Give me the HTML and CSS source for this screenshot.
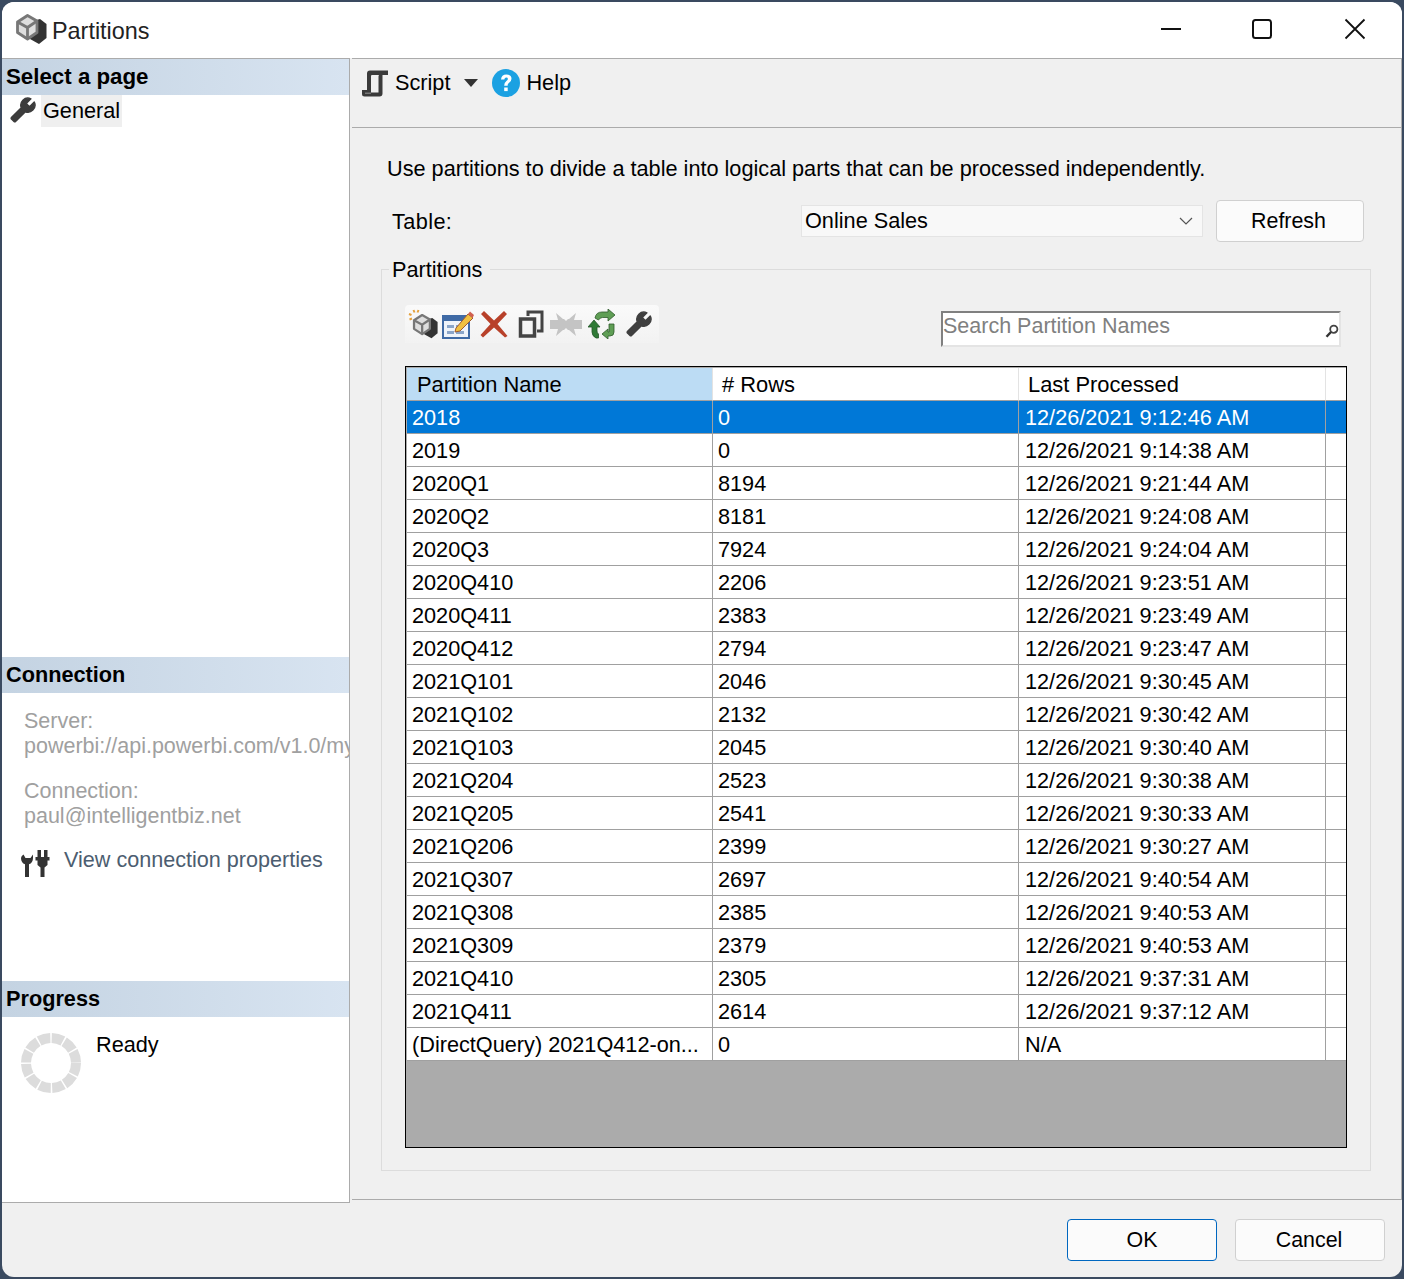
FILE: index.html
```html
<!DOCTYPE html>
<html lang="en">
<head>
<meta charset="utf-8">
<title>Partitions</title>
<link rel="stylesheet" href="styles.css">
</head>
<body>
<svg class="defs" width="0" height="0" aria-hidden="true">
  <symbol id="wrench" viewBox="0 0 24 24"><path transform="translate(24 0) scale(-1 1)" stroke-width="1.300" stroke-linejoin="round" d="M22.7 19l-9.1-9.1c.9-2.3.4-5-1.5-6.9-2-2-5-2.4-7.4-1.3L9 6 6 9 1.6 4.700C.4 7.100.9 10.100 2.900 12.100c1.900 1.900 4.600 2.400 6.900 1.500l9.100 9.100c.4.4 1 .4 1.400 0l2.300-2.300c.5-.4.5-1.100.1-1.400z"/></symbol>
  <symbol id="cube" viewBox="0 0 32 32">
    <path d="M15 9l10-3 6.500 5v14l-7.500 6-9-5z" fill="#333"/>
    <path d="M2.500 9l10-6.500 9.500 5.500v11.500l-9.500 6.500-10-6.500z" fill="#dedede" stroke="#777" stroke-width="2.800" stroke-linejoin="round"/>
    <path d="M2.500 9l10 5.500 9.500-6.500M12.500 14.500V25.500" fill="none" stroke="#777" stroke-width="2.800"/>
  </symbol>
</svg>
<div class="window">
  <header class="titlebar">
    <svg class="app-icon soft" width="32" height="32"><use href="#cube"/></svg>
    <span class="title">Partitions</span>
    <div class="caption">
      <svg class="cap-btn cap-min" width="22" height="22" viewBox="0 0 22 22"><path d="M1 11h20" stroke="#111" stroke-width="2"/></svg>
      <svg class="cap-btn" width="22" height="22" viewBox="0 0 22 22"><rect x="2" y="2" width="18" height="18" rx="2.5" fill="none" stroke="#111" stroke-width="2"/></svg>
      <svg class="cap-btn" width="22" height="22" viewBox="0 0 22 22"><path d="M1.500 1.500l19 19M20.500 1.500l-19 19" stroke="#111" stroke-width="1.800"/></svg>
    </div>
  </header>
  <div class="main">
    <aside class="sidebar">
      <section class="side-pages">
        <h2 class="side-head">Select a page</h2>
        <div class="page-item">
          <svg class="page-icon soft" width="26" height="26"><use href="#wrench" fill="#3c3c3c" stroke="#3c3c3c"/></svg>
          <span class="page-label">General</span>
        </div>
      </section>
      <section class="side-conn">
        <h2 class="side-head">Connection</h2>
        <div class="conn-body">
          <p class="conn-block">Server:<br>powerbi://api.powerbi.com/v1.0/my</p>
          <p class="conn-block">Connection:<br>paul@intelligentbiz.net</p>
          <div class="conn-link">
            <svg width="30" height="30" viewBox="0 0 30 30" class="conn-icon soft">
              <path d="M1 9c0 3 1.500 5.500 4 6.300V28h4V15.300C11.500 14.500 13 12 13 9V5.500L10.500 9h-5L3.500 5.500Q1 7 1 9z" fill="#333"/>
              <path d="M17.500 1h3.500v7h3V1h3.500v7h2v3.500h-2v4.500l-3 2.500V28h-4V18.500l-3-2.500v-4.500h-2V8h2z" fill="#333"/>
            </svg>
            <span>View connection properties</span>
          </div>
        </div>
      </section>
      <section class="side-progress">
        <h2 class="side-head">Progress</h2>
        <div class="progress-body">
          <svg class="spinner soft" width="60" height="60" viewBox="0 0 60 60"><circle cx="30" cy="30" r="25" fill="none" stroke="#dcdcdc" stroke-width="10" stroke-dasharray="11.6 1.49"/></svg>
          <span class="ready">Ready</span>
        </div>
      </section>
    </aside>
    <div class="pane">
      <div class="toolbar">
        <svg width="28" height="30" viewBox="0 0 28 30" class="tool-script soft">
          <path fill-rule="evenodd" d="M9 2.500H27V7H21.500V25.500Q21.500 28.500 18.500 28.500H3.500Q1 28.500 1 26V22H6V5.500Q6 2.500 9 2.500ZM10.500 7Q10 7.500 10 8.500V24.500H17.500V8.500Q17.500 7.500 18 7Z" fill="#3a3a3a"/>
          <path d="M4 24.500h6v1.500H4z" fill="#777"/>
        </svg>
        <span class="tool-text">Script</span>
        <span class="caret"></span>
        <svg width="28" height="28" viewBox="0 0 28 28" class="tool-help">
          <circle cx="14" cy="14" r="14" fill="#1ba1e2"/>
          <path d="M9 10.500q.5-5 5.300-5 5.200 0 5.200 4.300 0 2.700-2.600 4.100-1.300.8-1.300 2.800h-3.400q-.1-3.200 2.200-4.800 1.500-1 1.500-2 0-1.300-1.600-1.300-1.700 0-2 1.900z" fill="#fff"/>
          <rect x="12.200" y="18.500" width="3.500" height="3.600" fill="#fff"/>
        </svg>
        <span class="tool-text">Help</span>
      </div>
      <div class="content">
        <p class="intro">Use partitions to divide a table into logical parts that can be processed independently.</p>
        <div class="table-row">
          <span class="table-label">Table:</span>
          <div class="combo">
            <span>Online Sales</span>
            <svg width="14" height="8" viewBox="0 0 14 8"><path d="M1 1l6 6 6-6" fill="none" stroke="#555" stroke-width="1.200"/></svg>
          </div>
          <div class="btn btn-refresh">Refresh</div>
        </div>
        <fieldset class="group">
          <legend class="group-title">Partitions</legend>
          <div class="group-tools">
            <div class="icon-strip">
              <svg class="tool-new soft" width="30" height="30" viewBox="0 0 30 30"><use href="#cube" x="4" y="4" width="26" height="26"/><path d="M1 5l2.500 1M5.500 1l1 2.500M1.500 10.500l2.500-1M10.500 1l-1 2.500" stroke="#e5a13c" stroke-width="2"/></svg>
              <svg class="soft" width="32" height="30" viewBox="0 0 32 30">
                <rect x="1" y="7" width="26" height="22" fill="#eef3fa" stroke="#3f6aa5" stroke-width="2"/>
                <rect x="1" y="7" width="26" height="5" fill="#3f6aa5"/>
                <path d="M5 16h7v3H5zM14 16h8v3h-8zM5 22h7v3H5zM14 22h8v3h-8z" fill="#8aa5c9"/>
                <path d="M14 19L26 5l5 4-13 13-5 1z" fill="#f0c040" stroke="#a05a30" stroke-width="1"/>
                <path d="M26 5l2-2.500 4 3.500-1.500 3z" fill="#d06050"/>
              </svg>
              <svg class="tool-wide soft" width="28" height="28" viewBox="0 0 28 28"><path d="M4 1l10 9.500L24 1l3 3-9.500 10L27.500 26l-2.500 1.500L14 17.500 3 27.500 .5 25 10.500 14 1 4z" fill="#b8412a"/></svg>
              <svg class="soft" width="26" height="28" viewBox="0 0 26 28"><path d="M10 6V2h14v19h-5" fill="none" stroke="#444" stroke-width="3"/><rect x="2.500" y="9" width="14" height="17" fill="none" stroke="#444" stroke-width="3.500"/></svg>
              <svg class="soft" width="32" height="24" viewBox="0 0 32 24"><path d="M0 8h8L6 1l7 6h1l2 2 2-2h1l7-6-2 7h8v9h-8l2 7-7-6h-1l-2-2-2 2h-1l-7 6 2-7H0z" fill="#c4c4c4"/></svg>
              <svg class="tool-wide soft" width="28" height="30" viewBox="0 0 28 30">
                <path d="M7 9q1-6 7-6h6V0l7 6-7 6V8.500h-5.500q-2.500 0-4 2.500z" fill="#5f9e55" stroke="#2e5a2c" stroke-width=".8"/>
                <path d="M21 15h5v8q0 4-4 4h-2v3l-6-5 6-5v3h1z" fill="#5f9e55" stroke="#2e5a2c" stroke-width=".8"/>
                <path d="M0 18l6-7 6 7H9v4q0 2 1.500 3v4H8q-4-2-4-6v-5z" fill="#2f7a36" stroke="#24552a" stroke-width=".8"/>
              </svg>
              <svg class="soft" width="26" height="26"><use href="#wrench" fill="#3f3f3f" stroke="#3f3f3f"/></svg>
            </div>
            <div class="search">
              <span class="search-text">Search Partition Names</span>
              <svg width="14" height="14" viewBox="0 0 14 14"><circle cx="8.800" cy="5.200" r="3.600" fill="none" stroke="#444" stroke-width="1.800"/><path d="M6 8l-4.500 4.800" stroke="#333" stroke-width="2.400"/></svg>
            </div>
          </div>
          <div class="grid-wrap">
            <table class="grid">
              <colgroup><col class="c1"><col class="c2"><col class="c3"><col></colgroup>
              <thead>
                <tr><th class="th-sel">Partition Name</th><th># Rows</th><th>Last Processed</th><th></th></tr>
              </thead>
              <tbody>
                <tr class="sel"><td>2018</td><td>0</td><td>12/26/2021 9:12:46 AM</td><td></td></tr>
                <tr><td>2019</td><td>0</td><td>12/26/2021 9:14:38 AM</td><td></td></tr>
                <tr><td>2020Q1</td><td>8194</td><td>12/26/2021 9:21:44 AM</td><td></td></tr>
                <tr><td>2020Q2</td><td>8181</td><td>12/26/2021 9:24:08 AM</td><td></td></tr>
                <tr><td>2020Q3</td><td>7924</td><td>12/26/2021 9:24:04 AM</td><td></td></tr>
                <tr><td>2020Q410</td><td>2206</td><td>12/26/2021 9:23:51 AM</td><td></td></tr>
                <tr><td>2020Q411</td><td>2383</td><td>12/26/2021 9:23:49 AM</td><td></td></tr>
                <tr><td>2020Q412</td><td>2794</td><td>12/26/2021 9:23:47 AM</td><td></td></tr>
                <tr><td>2021Q101</td><td>2046</td><td>12/26/2021 9:30:45 AM</td><td></td></tr>
                <tr><td>2021Q102</td><td>2132</td><td>12/26/2021 9:30:42 AM</td><td></td></tr>
                <tr><td>2021Q103</td><td>2045</td><td>12/26/2021 9:30:40 AM</td><td></td></tr>
                <tr><td>2021Q204</td><td>2523</td><td>12/26/2021 9:30:38 AM</td><td></td></tr>
                <tr><td>2021Q205</td><td>2541</td><td>12/26/2021 9:30:33 AM</td><td></td></tr>
                <tr><td>2021Q206</td><td>2399</td><td>12/26/2021 9:30:27 AM</td><td></td></tr>
                <tr><td>2021Q307</td><td>2697</td><td>12/26/2021 9:40:54 AM</td><td></td></tr>
                <tr><td>2021Q308</td><td>2385</td><td>12/26/2021 9:40:53 AM</td><td></td></tr>
                <tr><td>2021Q309</td><td>2379</td><td>12/26/2021 9:40:53 AM</td><td></td></tr>
                <tr><td>2021Q410</td><td>2305</td><td>12/26/2021 9:37:31 AM</td><td></td></tr>
                <tr><td>2021Q411</td><td>2614</td><td>12/26/2021 9:37:12 AM</td><td></td></tr>
                <tr><td>(DirectQuery) 2021Q412-on...</td><td>0</td><td>N/A</td><td></td></tr>
              </tbody>
            </table>
          </div>
        </fieldset>
      </div>
    </div>
  </div>
  <footer class="footer">
    <div class="btn btn-ok">OK</div>
    <div class="btn btn-cancel">Cancel</div>
  </footer>
</div>
</body>
</html>
```
FILE: styles.css
```css
* { box-sizing: border-box; }
html, body { margin: 0; padding: 0; }
body {
  width: 1404px;
  height: 1279px;
  padding: 2px;
  background: #3a4a60;
  font-family: "Liberation Sans", Arial, sans-serif;
  font-size: 21.7px;
  color: #000;
  overflow: hidden;
}
.defs { position: absolute; }
.soft { filter: blur(.35px); }
.window {
  width: 1400px;
  height: 1275px;
  display: flex;
  flex-direction: column;
  background: #f0f0f0;
  border-radius: 12px;
  overflow: hidden;
}
.titlebar {
  height: 56px;
  flex: none;
  display: flex;
  align-items: center;
  background: #fff;
  padding-left: 13px;
}
.app-icon { flex: none; margin-top: -2px; }
.title { margin-left: 5px; font-size: 23.4px; color: #222; margin-top: 2px; }
.caption { margin-left: auto; display: flex; padding-right: 36px; margin-top: -2px; gap: 71px; }
.cap-btn { display: block; }
.cap-min { margin-right: -2px; }

.main { flex: none; height: 1145px; display: flex; align-items: stretch; }

.sidebar {
  width: 348px;
  flex: none;
  display: flex;
  flex-direction: column;
  background: #fff;
  border-top: 1px solid #ababab;
  border-right: 1px solid #ababab;
  border-bottom: 1px solid #ababab;
}
.side-head {
  margin: 0;
  height: 36px;
  padding-left: 4px;
  font-size: 21.7px;
  font-weight: 700;
  line-height: 36px;
  background: linear-gradient(90deg, #c4d3e2, #d8e4f1);
}
.side-pages { height: 598px; flex: none; }
.side-pages .side-head { font-size: 22.3px; }
.page-item { display: flex; align-items: flex-start; height: 32px; padding-left: 8px; }
.page-icon { flex: none; margin-top: 2px; }
.page-label {
  margin-left: 5px;
  padding: 0 2px;
  height: 32px;
  line-height: 32px;
  background: #efefef;
}
.side-conn { height: 324px; flex: none; }
.conn-body { padding: 16px 0 0 22px; color: #a0a0a0; font-size: 21.5px; }
.conn-block { margin: 0 0 20px; line-height: 25px; white-space: nowrap; overflow: hidden; }
.conn-link { display: flex; align-items: flex-start; margin-top: -2px; color: #4c5d70; font-size: 21.6px; }
.conn-link span { margin-left: 14px; line-height: 25px; }
.conn-icon { margin-left: -4px; margin-top: 2px; flex: none; }
.side-progress { flex: 1; }
.progress-body { display: flex; align-items: flex-start; padding: 16px 0 0 19px; }
.spinner { flex: none; }
.ready { margin-left: 15px; line-height: 23px; }

.pane {
  flex: 1;
  margin-left: 2px;
  height: 1142px;
  display: flex;
  flex-direction: column;
  border-top: 1px solid #ababab;
  border-right: 1px solid #ababab;
  border-bottom: 1px solid #ababab;
}
.toolbar {
  height: 69px;
  flex: none;
  display: flex;
  align-items: center;
  padding: 0 0 20px 9px;
  border-bottom: 1px solid #ababab;
}
.tool-script { flex: none; }
.tool-text { margin-left: 6px; }
.caret {
  width: 0; height: 0;
  margin: 0 14px 0 14px;
  border-left: 7px solid transparent;
  border-right: 7px solid transparent;
  border-top: 8px solid #333;
}
.tool-help { flex: none; }
.content { flex: 1; padding: 29px 29px 0 29px; min-height: 0; }
.intro { margin: 0; padding-left: 6px; line-height: 24px; }
.table-row { display: flex; align-items: center; height: 42px; margin-top: 19px; padding-left: 11px; }
.table-label { width: 409px; flex: none; margin-top: 2px; letter-spacing: .4px; }
.combo {
  width: 402px;
  height: 32px;
  flex: none;
  display: flex;
  align-items: center;
  justify-content: space-between;
  padding: 0 9px 0 3px;
  background: #f8f8f8;
  border: 1px solid #e4e4e4;
}
.btn {
  width: 150px;
  height: 42px;
  display: flex;
  align-items: center;
  justify-content: center;
  font-size: 21.4px;
  background: #fbfbfb;
  border: 1px solid #d0d0d0;
  border-radius: 4px;
}
.btn-refresh { width: 148px; margin-left: 13px; padding-right: 3px; }
.group {
  margin: 14px 0 0 0;
  width: 990px;
  height: 915px;
  padding: 0 23px 0 23px;
  border: 1px solid #dcdcdc;
  min-width: 0;
}
.group-title { padding: 2px 8px 0 3px; margin-left: -16px; line-height: 24px; }
.group-tools { display: flex; justify-content: space-between; align-items: flex-start; height: 84px; padding-top: 23px; padding-right: 6px; }
.icon-strip {
  width: 254px;
  height: 38px;
  display: flex;
  align-items: center;
  gap: 6px;
  padding-left: 3px;
  background: linear-gradient(180deg, #fafafa, #f2f2f2);
  border-radius: 4px 4px 0 0;
}
.tool-new { margin-right: -2px; }
.tool-wide { margin-right: 4px; }
.search {
  width: 400px;
  height: 36px;
  margin-top: 6px;
  display: flex;
  justify-content: space-between;
  align-items: center;
  padding: 0 1px 0 0;
  background: #fff;
  border-style: solid;
  border-width: 2px;
  border-color: #808080 #e4e4e4 #e4e4e4 #808080;
  color: #808080;
  font-size: 21.5px;
}
.search svg { margin-top: 4px; margin-right: -1px; }
.search-text { margin-top: -5px; }
.grid-wrap {
  width: 942px;
  height: 782px;
  padding: 1px 0 0 1px;
  background: #ababab;
  border: 1px solid #000;
}
.grid { width: 939px; table-layout: fixed; border-collapse: separate; border-spacing: 0; background: #fff; }
.c1 { width: 306px; }
.c2 { width: 306px; }
.c3 { width: 307px; }
.grid th, .grid td {
  height: 33px;
  padding: 2px 0 0 5px;
  font-weight: 400;
  text-align: left;
  white-space: nowrap;
  overflow: hidden;
  border-bottom: 1px solid #a0a0a0;
  border-right: 1px solid #a0a0a0;
  line-height: 30px;
}
.grid td:nth-child(3) { padding-left: 6px; }
.grid th { padding-left: 9px; font-size: 21.9px; border-right-color: #e3e3e3; background: #fff; }
.grid th.th-sel { padding-left: 10px; background: #bcdcf4; }
.grid tr > :last-child { border-right: 0; }
.grid tr.sel td { background: #0078d7; color: #fff; }

.footer {
  flex: 1;
  display: flex;
  justify-content: flex-end;
  align-items: flex-start;
  gap: 18px;
  padding: 16px 17px 0 0;
}
.btn-ok { border-color: #0067c0; }
.btn-cancel { border-color: #d0d0d0; padding-right: 2px; }
```
